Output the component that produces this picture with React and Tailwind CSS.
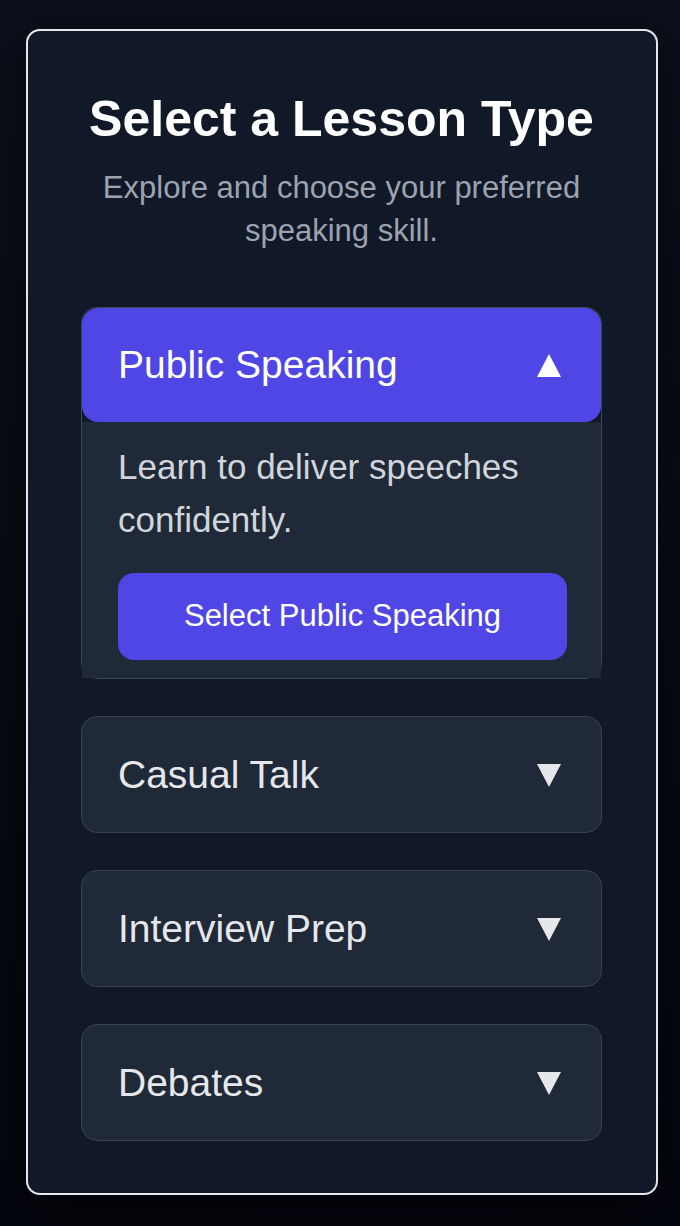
import React from "react";

function Tri({ up, className }) {
  return (
    <svg width="24" height="24" viewBox="0 0 24 24" className={className}>
      {up ? (
        <polygon points="12,1 24,24 0,24" fill="currentColor" />
      ) : (
        <polygon points="0,1 24,1 12,24" fill="currentColor" />
      )}
    </svg>
  );
}

function Item({ label }) {
  return (
    <div className="rounded-[16px] border border-[#374151] bg-[#1f2937]">
      <div className="flex h-[115px] items-center justify-between pl-[36px] pr-[40px]">
        <span className="text-[39px] leading-[44px] text-[#e5e7eb]">{label}</span>
        <Tri className="text-[#e5e7eb]" />
      </div>
    </div>
  );
}

export default function App() {
  return (
    <div
      className="min-h-screen w-full bg-gradient-to-b from-[#0c101b] to-[#04060d] pl-[26px] pt-[29px] pb-[32px]"
      style={{ fontFamily: '"Liberation Sans", Arial, sans-serif' }}
    >
      <div className="w-[632px] rounded-[14px] border-2 border-[#e5e7eb] bg-[#111827] pl-[53px] pr-[54px] pt-[58px] pb-[52px] shadow-[0_10px_40px_rgba(0,0,0,0.6)]">
        <h1 className="text-center text-[50px] font-bold leading-[60px] text-white">
          Select a Lesson Type
        </h1>
        <p className="mt-[17px] text-center text-[31px] leading-[43px] text-[#9ca3af]">
          Explore and choose your preferred speaking skill.
        </p>

        <div className="mt-[55px] flex flex-col gap-[37px]">
          <div className="rounded-[16px] border border-[#3f4756]">
            <div className="flex h-[114px] items-center justify-between rounded-[16px] bg-[#4f46e5] pl-[36px] pr-[40px]">
              <span className="text-[39px] leading-[44px] text-white">Public Speaking</span>
              <Tri up className="text-white" />
            </div>
            <div className="bg-[#1f2937] px-[36px] pt-[18px] pb-[18px]">
              <p className="text-[35px] leading-[53px] text-[#d1d5db]">
                Learn to deliver speeches confidently.
              </p>
              <button className="mt-[27px] flex h-[87px] w-[449px] items-center justify-center rounded-[16px] bg-[#4f46e5] text-[31px] text-white">
                Select Public Speaking
              </button>
            </div>
          </div>
          <Item label="Casual Talk" />
          <Item label="Interview Prep" />
          <Item label="Debates" />
        </div>
      </div>
    </div>
  );
}
